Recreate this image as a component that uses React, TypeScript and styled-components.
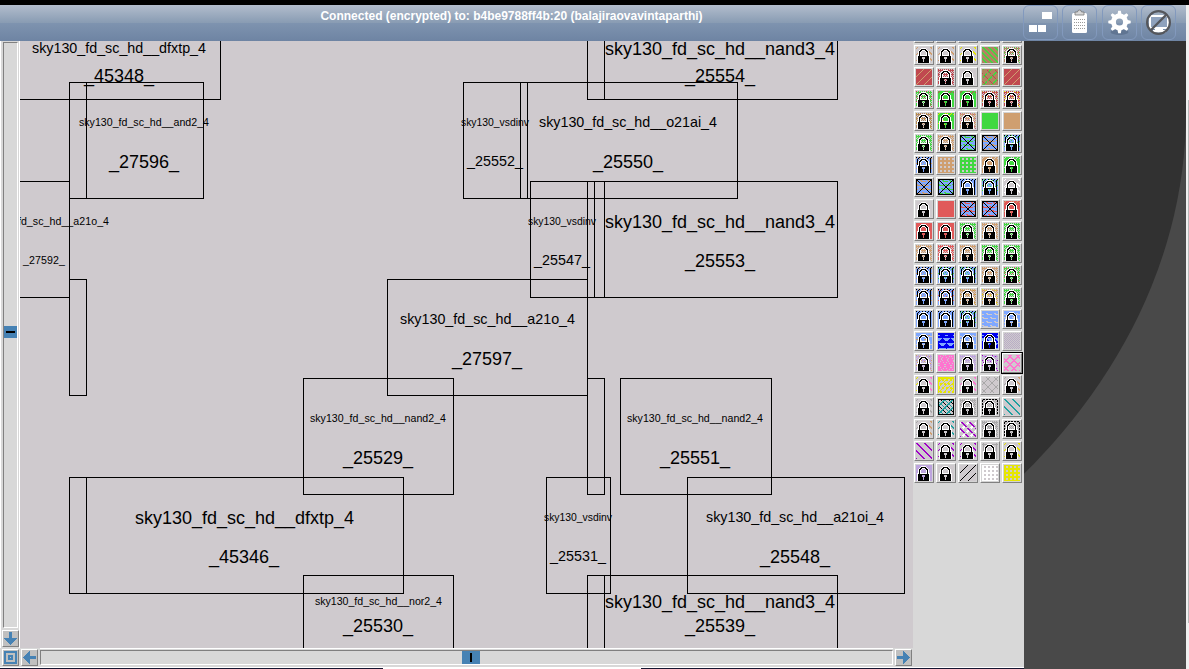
import React from 'react';
import styled, { createGlobalStyle } from 'styled-components';

const Global = createGlobalStyle`
  * { box-sizing: border-box; }
  body { margin: 0; background: #000; overflow: hidden; font-family: "Liberation Sans", Arial, sans-serif; }
`;

const Window = styled.div`
  width: 1189px;
  height: 669px;
  padding-top: 5px;
  display: flex;
  overflow: hidden;
  background: #000;
`;
const Viewer = styled.div`
  width: 1186px;
  display: flex;
  flex-direction: column;
`;
const PageScroll = styled.div`
  width: 3px;
  padding: 95px 0 0 2px;
  background: #f0f0f0;
`;
const PageThumb = styled.div`
  height: 523px;
  background: #b9b9b9;
`;
const StatusBar = styled.header`
  height: 36px;
  flex: none;
  display: flex;
  justify-content: space-between;
  background: linear-gradient(to bottom, #b2bdcd 0%, #899cb3 49%, #7e93af 51%, #6e84a3 100%);
`;
const StatusText = styled.div`
  width: 1023px;
  padding-top: 4px;
  text-align: center;
  color: #fff;
  font-size: 12px;
  line-height: 14px;
  font-weight: bold;
`;
const Tools = styled.div`
  display: flex;
  justify-content: space-between;
  width: 163px;
  padding-right: 10px;
`;
const ToolButton = styled.div`
  width: 35px;
  height: 35px;
  border: 1px solid #8299bd;
  border-radius: 6px;
  svg { display: block; }
`;
const Desk = styled.div`
  height: 628px;
  overflow: hidden;
  background: #494949;
`;
const Screen = styled.div`
  height: 671px;
  background: #313131;
  border-bottom-right-radius: 800px 600px;
`;
const Remote = styled.div`
  width: 1024px;
  height: 628px;
  display: flex;
  flex-direction: column;
  background: #d8d8d8;
`;
const Main = styled.div`
  height: 607px;
  display: flex;
`;
const LeftRail = styled.div`
  width: 20px;
  padding: 1px 0 0 2px;
  border-left: 1px solid #fff;
  border-right: 1px solid #fff;
  display: flex;
  flex-direction: column;
`;
const Track = styled.div<{ $vertical?: boolean }>`
  width: ${p => (p.$vertical ? '15px' : '853px')};
  height: ${p => (p.$vertical ? '586px' : '15px')};
  padding: ${p => (p.$vertical ? '283px 0 0 0' : '0 0 0 421px')};
  border: 1px solid;
  border-color: #808080 #fff #fff #808080;
`;
const Thumb = styled.div<{ $vertical?: boolean }>`
  width: ${p => (p.$vertical ? '13px' : '18px')};
  height: ${p => (p.$vertical ? '12px' : '13px')};
  padding: ${p => (p.$vertical ? '5px 2px' : '2px 8px')};
  background: #4682b4;
`;
const Grip = styled.div<{ $vertical?: boolean }>`
  width: ${p => (p.$vertical ? '9px' : '2px')};
  height: ${p => (p.$vertical ? '2px' : '9px')};
  background: #000;
`;
const RailButton = styled.div`
  width: 17px;
  height: 17px;
  flex: none;
  padding: 1px;
  border: 1px solid;
  border-color: #fff #808080 #808080 #fff;
  background: #c0c0c0;
  svg { display: block; }
`;
const DownSlot = styled.div`
  margin: 2px 0 0 -1px;
`;
const BottomRail = styled.div`
  height: 20px;
  display: flex;
  padding: 1px 0 0 2px;
  gap: 2px;
  border-bottom: 1px solid #fff;
`;
const TrackSlot = styled.div`
  width: 853px;
  padding-top: 1px;
  box-shadow: 0 -1px #fff;
`;
const BottomLine = styled.div`
  height: 1px;
  background: linear-gradient(to right, #151530 383px, #fff 383px, #fff 641px, #151530 641px);
`;
const Canvas = styled.svg`
  display: block;
  width: 893px;
  height: 607px;
  background: #cfcace;
  font-family: "Liberation Sans", Arial, sans-serif;
`;
const Palette = styled.div`
  width: 111px;
  height: 607px;
  overflow: hidden;
`;
const Swatches = styled.div`
  display: grid;
  grid-template-columns: repeat(5, 20px);
  grid-auto-rows: 20px;
  gap: 2px;
  margin: -18px 0 0 1px;
`;
const Swatch = styled.div<{ $on?: boolean }>`
  border: 1px solid;
  border-color: #fff #808080 #808080 #fff;
  padding: 1px;
  background: #d4d4d4;
  outline: ${p => (p.$on ? '1px solid #000' : 'none')};
  svg { display: block; }
`;

type Cell = { x: number; y: number; r: number; b: number };
const cells: Cell[] = [
  { x: 0, y: 0, r: 220, b: 99 },
  { x: 69, y: 82, r: 86, b: 198 }, { x: 86, y: 82, r: 203, b: 198 },
  { x: 0, y: 181, r: 69, b: 297 }, { x: 69, y: 279, r: 86, b: 395 },
  { x: 587, y: 0, r: 604, b: 99 }, { x: 604, y: 0, r: 837, b: 99 },
  { x: 463, y: 82, r: 527, b: 198 }, { x: 520, y: 82, r: 737, b: 198 },
  { x: 530, y: 181, r: 594, b: 297 }, { x: 587, y: 181, r: 604, b: 297 }, { x: 604, y: 181, r: 837, b: 297 },
  { x: 387, y: 279, r: 587, b: 395 }, { x: 587, y: 378, r: 604, b: 494 },
  { x: 303, y: 378, r: 453, b: 494 }, { x: 620, y: 378, r: 771, b: 494 },
  { x: 69, y: 477, r: 86, b: 593 }, { x: 86, y: 477, r: 403, b: 593 },
  { x: 546, y: 477, r: 610, b: 593 }, { x: 687, y: 477, r: 904, b: 593 },
  { x: 303, y: 575, r: 453, b: 700 }, { x: 587, y: 575, r: 604, b: 700 }, { x: 604, y: 575, r: 837, b: 700 },
];

// text, left, baseline, width, font size
type Label = [string, number, number, number, number];
const labels: Label[] = [
  ['sky130_fd_sc_hd__dfxtp_4', 32, 53, 174, 14.3], ['_45348_', 84, 82, 70, 18],
  ['sky130_fd_sc_hd__and2_4', 79, 126, 130, 10.6], ['_27596_', 109, 168, 70, 18],
  ['sky130_fd_sc_hd__a21o_4', -22, 225, 131, 10.6], ['_27592_', 23, 264, 42, 10.6],
  ['sky130_fd_sc_hd__nand3_4', 605, 55, 230, 18], ['_25554_', 685, 82, 70, 18],
  ['sky130_vsdinv', 461, 126, 68, 10.4], ['_25552_', 467, 166, 56, 14.3],
  ['sky130_fd_sc_hd__o21ai_4', 539, 127, 178, 14.3], ['_25550_', 593, 168, 70, 18],
  ['sky130_vsdinv', 528, 225, 68, 10.4], ['_25547_', 534, 265, 56, 14.3],
  ['sky130_fd_sc_hd__nand3_4', 605, 228, 230, 18], ['_25553_', 685, 267, 70, 18],
  ['sky130_fd_sc_hd__a21o_4', 400, 324, 175, 14.3], ['_27597_', 452, 365, 70, 18],
  ['sky130_fd_sc_hd__nand2_4', 310, 422, 136, 10.6], ['_25529_', 343, 464, 70, 18],
  ['sky130_fd_sc_hd__nand2_4', 627, 422, 136, 10.6], ['_25551_', 660, 464, 70, 18],
  ['sky130_fd_sc_hd__dfxtp_4', 135, 524, 219, 18], ['_45346_', 209, 563, 70, 18],
  ['sky130_vsdinv', 544, 521, 68, 10.4], ['_25531_', 550, 561, 56, 14.3],
  ['sky130_fd_sc_hd__a21oi_4', 706, 522, 178, 14.3], ['_25548_', 760, 563, 70, 18],
  ['sky130_fd_sc_hd__nor2_4', 315, 605, 127, 10.6], ['_25530_', 343, 632, 70, 18],
  ['sky130_fd_sc_hd__nand3_4', 605, 608, 230, 18], ['_25539_', 685, 632, 70, 18],
];

const padlock = [
  '................',
  '.....WWWWW......',
  '....WBBBBBW.....',
  '...WBBWWWBBW....',
  '..WBBW...WBBW...',
  '..WBW.....WBW...',
  '..WBW.....WBW...',
  '..WBW.....WBW...',
  '.WWBWWWWWWWBWW..',
  '.WBBBBBBBBBBBW..',
  '.WBBBB...BBBBW..',
  '.WBBBB...BBBBW..',
  '.WBBBBB.BBBBBW..',
  '.WBBBBB.BBBBBW..',
  '.WBBBBB.BBBBBW..',
  '.WBBBBBBBBBBBW..',
];

const colors: Record<string, string> = {
  t: '#cf9f70', g: '#40d840', y: '#e6e600', n: '#b08560', r: '#c0484f', R: '#e05a5a', b: '#80a8ff',
  B: '#0000ee', l: '#bda4de', p: '#ff74d0', v: '#a000c8', c: '#20a0a0', a: '#a8a8a8', k: '#000000',
  w: '#ffffff', o: '#c89a30', e: '#cfcace', q: '#c26084', m: '#b9adc6',
};

// Stipple masks: given a pixel and the two inks, give the ink of that pixel
type Ink = (x: number, y: number, f: string, s: string) => string;
const inks: Record<string, Ink> = {
  empty: () => 'e',
  solid: (x, y, f, s) => ((x * 3 + y * 5) % 23 === 4 || (y < 4 && (x + y) % 6 === 1) ? s : f),
  check: (x, y, f, s) => ((x + y) % 2 && y % 4 !== 1 ? 'e' : (x * 3 + y) % 5 === 0 ? s : f),
  sparse: (x, y, f, s) => (x > 12 && (x - y + 16) % 6 < 2 ? f : x < 3 && (x + y) % 6 === 1 ? (s === 'e' ? f : s) : 'e'),
  down: (x, y, f, s) => ((x - y + 32) % 8 < (s === 'e' ? 2 : 1) ? f : s),
  olive: (x, y, f, s) => ((x - y + 30) % 6 < 2 ? f : s),
  up: (x, y, f, s) => ((x + y) % 8 === 7 ? f : s),
  weave: (x, y, f, s) => ((x - y + 32) % 8 === 4 && y % 5 > 0 ? s : (x + y) % 8 < 2 && x % 5 > 0 ? f : 'n'),
  box: (x, y, f, s) => (x === 0 || y === 0 || x === 15 || y === 15 || x === y || x + y === 15 ? 'k'
    : (y % 4 === 2 && (x + y) % 7 < 5) || (y % 4 === 1 && (x + y) % 7 > 4) ? s : f),
  edge: (x, y, f, s) => ((x === 1 || x === 14) && y > 1 ? 'k' : y < 2 && (x + y) % 3 === 0 ? 'k'
    : (x * 3 + y) % 5 === 1 ? s : f),
  grid: (x, y, f, s) => (x % 4 > 1 && (y + 1) % 4 > 1 ? s : f),
  waves: (x, y, f, s) => (y % 4 === 3 && (x + y) % 8 < 5 ? 'e' : y % 4 === 2 && (x + y) % 8 > 5 ? (s === f ? 'e' : s) : f),
  zigzag: (x, y, f, s) => (Math.abs((x + (y > 7 ? 4 : 0)) % 8 - 4) > (y % 5) + 0.5 && y % 5 < 3 && y > 1 ? s : f),
  fine: (x, y, f) => ((x + y) % 2 ? f : 'e'),
  hatch: (x, y, f) => ((x + y) % 8 === 7 || (x - y + 16) % 8 === 4 ? f : 'e'),
  fat: (x, y, f) => ((x + y) % 8 > 5 || (x - y + 16) % 8 === 4 || (x - y + 16) % 8 === 5 ? f : 'e'),
  blob: (x, y, f) => ((x * 5 + y * 3) % 11 === 2 || (x + y * 7) % 13 === 5 ? 'e' : f),
  boxed: (x, y, f) => (x === 0 || y === 0 || x === 15 || y === 15 ? 'k' : (x + y) % 8 === 6 || (x + y) % 8 === 7 ? f
    : (x - y + 16) % 8 === 2 ? 'k' : (x - y + 16) % 8 === 6 ? f : 'e'),
  rim: (x, y, f) => ((y === 0 || x === 0 || x === 15) && (x + y) % 3 > 0 ? 'k' : (x + y) % 2 ? 'e' : f),
  frame: (x, y, f) => (y === 1 || x === 1 || x === 14 ? f : 'e'),
  dash: (x, y, f) => ((x - y + 32) % 8 < 2 && y % 6 > 0 ? f : (x + y) % 8 < 3 && (x - y + 32) % 8 > 3 ? 'w' : 'e'),
  cream: (x, y, f) => (y < 2 || x < 1 || x > 14 || (x + (y % 8 > 3 ? 2 : 0)) % 4 < 2 && y % 4 > 1 || (x + y) % 5 === 0 ? f : 'e'),
};

// Layer table, five swatches to a row: L marks a locked layer, then stipple, inks
const layers: string[] = [
  'L empty ee', 'L empty ee', 'L empty ee', 'L empty ee', 'L empty ee',
  'L sparse te', 'L sparse te', 'L sparse ye', '- olive gn', 'L check ng',
  '- up tr', 'L check rr', 'L empty ee', '- weave gr', '- up tr',
  'L check gr', 'L solid gr', 'L solid gr', 'L check ro', 'L check ry',
  'L check no', 'L solid gy', 'L check tq', '- solid gg', '- solid tt',
  'L check gg', 'L check tt', '- box bg', '- box bt', 'L edge bg',
  'L edge bt', '- grid te', '- grid ge', 'L solid te', 'L solid ge',
  '- box bt', '- box bg', 'L edge bb', 'L edge bg', 'L sparse ww',
  'L empty ee', '- solid RR', '- box bR', '- box bR', 'L solid Rt',
  'L solid RR', 'L solid RR', 'L check gg', 'L check tt', 'L check gg',
  'L check tt', 'L check RR', 'L check tt', 'L check gg', 'L check gg',
  'L edge bt', 'L edge bg', 'L edge bg', 'L check tt', 'L check gR',
  'L edge bt', 'L edge bR', 'L check to', 'L check ty', 'L check gg',
  'L edge bb', 'L edge bb', 'L edge bg', '- waves bb', 'L waves bb',
  'L waves bt', '- zigzag Bb', 'L waves bb', 'L zigzag Bb', '- fine mm',
  'L check lt', '- blob pp', 'L check ll', 'L check lv', '- fat pp',
  'L sparse py', '- cream yy', 'L sparse pp', '- hatch aa', 'L sparse ta',
  'L sparse ae', '- boxed cc', 'L check aa', 'L rim aa', '- down ce',
  'L sparse ta', 'L sparse ce', '- dash vv', 'L check aa', 'L rim aa',
  '- down ve', 'L sparse ve', 'L sparse ve', 'L frame aa', 'L sparse ye',
  'L solid ll', 'L empty ee', '- up ke', '- grid we', '- grid ye',
];

const Stipple = ({ layer }: { layer: string }) => {
  const [lock, kind, pair] = layer.split(' ');
  const runs: { x: number; y: number; w: number; key: string }[] = [];
  for (let y = 0; y < 16; y++) {
    for (let x = 0; x < 16; x++) {
      const mark = lock === 'L' ? padlock[y][x] : '.';
      const key = mark === 'W' ? 'w' : mark === 'B' ? 'k' : inks[kind](x, y, pair[0], pair[1]);
      const last = runs[runs.length - 1];
      if (last && last.y === y && last.key === key) last.w++;
      else runs.push({ x, y, w: 1, key });
    }
  }
  return (
    <svg width="16" height="16" shapeRendering="crispEdges">
      {runs.map((r, i) => <rect key={i} x={r.x} y={r.y} width={r.w} height="1" fill={colors[r.key]} />)}
    </svg>
  );
};

const Arrow = ({ turn }: { turn: number }) => (
  <svg width="13" height="13" viewBox="0 0 13 13" shapeRendering="crispEdges">
    <path d="M5 0h3v6h5L6.5 13 0 6h5z" fill="#4682b4" transform={`rotate(${turn} 6.5 6.5)`} />
  </svg>
);

const teeth = [0, 45, 90, 135, 180, 225, 270, 315];

export default function App() {
  return (
    <>
      <Global />
      <Window>
        <Viewer>
          <StatusBar>
            <StatusText>Connected (encrypted) to: b4be9788ff4b:20 (balajiraovavintaparthi)</StatusText>
            <Tools>
              <ToolButton>
                <svg width="33" height="33" fill="#fff">
                  <path d="M18 6h10v7H18zM5 19h8v7H5zM14 19h8v7h-8z" />
                </svg>
              </ToolButton>
              <ToolButton>
                <svg width="33" height="33">
                  <rect x="9" y="7" width="15" height="20" rx="1.5" fill="#fff" />
                  <path d="M12 6h2.5a2 2 0 0 1 4 0H21v3h-9z" fill="#d8d8d8" stroke="#777" strokeWidth=".8" />
                  <path d="M11 13.5h11M11 16.5h11M11 19.5h11M11 22.5h11" stroke="#999" strokeDasharray="1 1" />
                </svg>
              </ToolButton>
              <ToolButton>
                <svg width="33" height="33">
                  <ellipse cx="16.5" cy="26" rx="9" ry="3" fill="#4c607c" opacity=".5" />
                  <g fill="#fff">
                    {teeth.map(a => <path key={a} d="M14.3 9l.9-4.2h2.6l.9 4.2z" transform={`rotate(${a} 16.5 16)`} />)}
                  </g>
                  <circle cx="16.5" cy="16" r="6" fill="none" stroke="#fff" strokeWidth="4.8" />
                </svg>
              </ToolButton>
              <ToolButton>
                <svg width="33" height="33">
                  <rect x="8" y="10" width="18" height="12" rx="1" fill="#8fa2bd" stroke="#fff" strokeWidth="2" />
                  <path d="M13 21h8v3h3v2.5H11V24h2z" fill="#fff" />
                  <circle cx="16.5" cy="16.5" r="11.4" fill="none" stroke="#55575c" strokeWidth="2.2" />
                  <path d="M8.5 24.5l16-16" stroke="#55575c" strokeWidth="2.4" />
                </svg>
              </ToolButton>
            </Tools>
          </StatusBar>
          <Desk>
            <Screen>
              <Remote>
                <Main>
                  <LeftRail>
                    <Track $vertical><Thumb $vertical><Grip $vertical /></Thumb></Track>
                    <DownSlot><RailButton><Arrow turn={0} /></RailButton></DownSlot>
                  </LeftRail>
                  <Canvas viewBox="20 41 893 607">
                    <g fill="none" stroke="#000" shapeRendering="crispEdges">
                      {cells.map((c, i) => (
                        <path key={i} d={`M${c.x + 0.5} ${c.y + 0.5}H${c.r + 0.5}V${c.b + 0.5}H${c.x + 0.5}z`} />
                      ))}
                      <path d="M69.5 198V280" />
                    </g>
                    {labels.map(([text, x, y, w, size], i) => (
                      <text key={i} x={x} y={y} textLength={w} fontSize={size} fill="#000">{text}</text>
                    ))}
                  </Canvas>
                  <Palette>
                    <Swatches>
                      {layers.map((l, i) => <Swatch key={i} $on={i === 79}><Stipple layer={l} /></Swatch>)}
                    </Swatches>
                  </Palette>
                </Main>
                <BottomRail>
                  <RailButton>
                    <svg width="13" height="13" shapeRendering="crispEdges" fill="none" stroke="#4682b4">
                      <rect x="1" y="1" width="11" height="11" strokeWidth="2" />
                      <rect x="5" y="5" width="3" height="3" strokeWidth="2" />
                    </svg>
                  </RailButton>
                  <RailButton><Arrow turn={90} /></RailButton>
                  <TrackSlot><Track><Thumb><Grip /></Thumb></Track></TrackSlot>
                  <RailButton><Arrow turn={270} /></RailButton>
                </BottomRail>
                <BottomLine />
              </Remote>
            </Screen>
          </Desk>
        </Viewer>
        <PageScroll><PageThumb /></PageScroll>
      </Window>
    </>
  );
}
